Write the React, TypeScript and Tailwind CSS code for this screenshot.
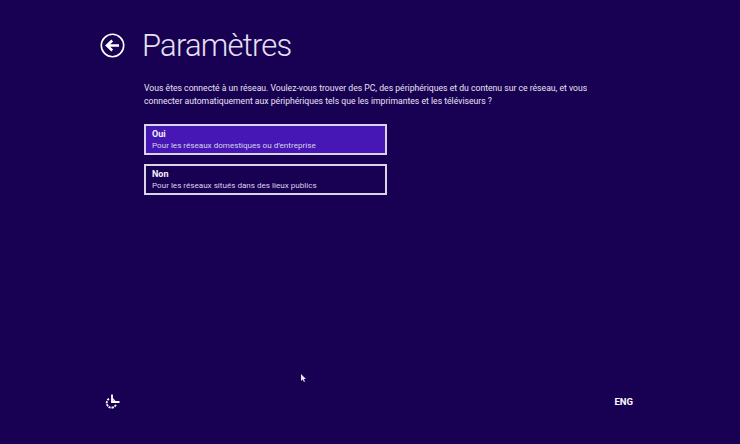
function ChoiceCard({ title, text, selected }: { title: string; text: string; selected?: boolean }) {
  return (
    <div
      className={`flex h-[31px] w-[243px] flex-col justify-center border-2 border-[#d9d4e8] px-[6px] ${
        selected ? "bg-[#4617b4]" : "bg-[#180052]"
      }`}
    >
      <p className="text-[9px] leading-[11px] font-bold text-[#f4f2fa]">{title}</p>
      <p className="text-[8.1px] leading-[11px] text-[#d8d2e8]">{text}</p>
    </div>
  );
}

function App() {
  return (
    <main className="relative flex h-[444px] w-[740px] flex-col overflow-hidden bg-[#180052] font-['Roboto',sans-serif] text-white">
      <header className="flex h-[72px] items-center gap-[17px] pt-[18px] pl-[100px]">
        <svg width="25" height="25" viewBox="0 0 25 25" fill="none" stroke="white">
          <circle cx="12.5" cy="12.5" r="11.2" strokeWidth="1.6" />
          <path d="M19 12.5H7.5M12.2 7.5 7 12.5l5.2 5" strokeWidth="2.6" />
        </svg>
        <h1 className="text-[31px] leading-none font-light tracking-[-0.8px] text-[#e6e1f2]">Paramètres</h1>
      </header>

      <section className="mt-[10px] ml-[144px] flex flex-col">
        <p className="w-[450px] text-[8.65px] leading-[13px] text-[#e8e4f2]">
          Vous êtes connecté à un réseau. Voulez-vous trouver des PC, des périphériques et du contenu sur ce réseau, et vous connecter automatiquement aux périphériques tels que les imprimantes et les téléviseurs ?
        </p>
        <div className="mt-[16px] flex flex-col gap-[9px]">
          <ChoiceCard selected title="Oui" text="Pour les réseaux domestiques ou d’entreprise" />
          <ChoiceCard title="Non" text="Pour les réseaux situés dans des lieux publics" />
        </div>
      </section>

      <footer className="mt-auto mb-[34px] flex items-center justify-between pr-[107px] pl-[104px]">
        <svg width="16" height="16" viewBox="0 0 16 16" fill="none" stroke="white" strokeWidth="1.8">
          <path d="M5 4.8a4.8 4.8 0 1 0 7 5.8" strokeDasharray="2.2 0.8" />
          <path d="M8 0.5V8h7.5" />
          <path d="M8 4 11.5 8" strokeWidth="1.2" />
        </svg>
        <span className="text-[9.5px] font-bold">ENG</span>
      </footer>

      <svg className="absolute top-[374px] left-[301px]" width="5" height="8" viewBox="0 0 5 8">
        <path d="M0 0v7l1.6-1.5L3 8l1-.5-1.2-2.4H5z" fill="#e8e4f0" />
      </svg>
    </main>
  );
}

export default App;
